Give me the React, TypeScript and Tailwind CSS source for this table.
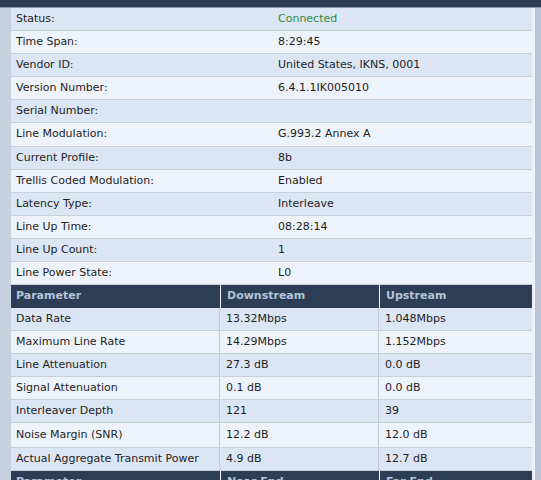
import React from "react";

const info: [string, string, boolean?][] = [
  ["Status:", "Connected", true],
  ["Time Span:", "8:29:45"],
  ["Vendor ID:", "United States, IKNS, 0001"],
  ["Version Number:", "6.4.1.1IK005010"],
  ["Serial Number:", ""],
  ["Line Modulation:", "G.993.2 Annex A"],
  ["Current Profile:", "8b"],
  ["Trellis Coded Modulation:", "Enabled"],
  ["Latency Type:", "Interleave"],
  ["Line Up Time:", "08:28:14"],
  ["Line Up Count:", "1"],
  ["Line Power State:", "L0"],
];

const stats: [string, string, string][] = [
  ["Data Rate", "13.32Mbps", "1.048Mbps"],
  ["Maximum Line Rate", "14.29Mbps", "1.152Mbps"],
  ["Line Attenuation", "27.3 dB", "0.0 dB"],
  ["Signal Attenuation", "0.1 dB", "0.0 dB"],
  ["Interleaver Depth", "121", "39"],
  ["Noise Margin (SNR)", "12.2 dB", "12.0 dB"],
  ["Actual Aggregate Transmit Power", "4.9 dB", "12.7 dB"],
];

function rowBg(i: number) {
  return i % 2 === 0 ? "bg-[#dbe5f3]" : "bg-[#eef3fb]";
}

function HeaderRow({ a, b, c }: { a: string; b: string; c: string }) {
  return (
    <div className="flex h-[23px] bg-[#f2f5fa]">
      <div className="w-[209px] flex items-center pl-[5px] bg-[#2e3d56] font-bold text-[#b3c4da]">{a}</div>
      <div className="w-[1px]" />
      <div className="w-[158px] flex items-center pl-[6px] bg-[#2e3d56] font-bold text-[#b3c4da]">{b}</div>
      <div className="w-[1px]" />
      <div className="flex-1 flex items-center pl-[6px] bg-[#2e3d56] font-bold text-[#b3c4da]">{c}</div>
    </div>
  );
}

export default function App() {
  return (
    <div
      className="w-[541px] h-[480px] overflow-hidden bg-[#c8d2e0] text-[11px] text-[#1e1e1e]"
      style={{ fontFamily: '"DejaVu Sans", Verdana, sans-serif' }}
    >
      <div className="h-[8px] bg-[#2d3c56] border-b border-[#8c9ab0]" />
      <div className="flex">
        <div className="w-[11px] shrink-0 bg-[#c6d0de]" />
        <div className="w-[521px] shrink-0">
          {info.map(([k, v, green], i) => (
            <div
              key={k}
              className={`flex ${i === 5 ? "h-[24px]" : "h-[23px]"} items-center border-b border-[#c9cfd9] ${rowBg(i)}`}
            >
              <div className="w-[267px] pl-[5px]">{k}</div>
              <div className={green ? "text-[#2f8a3c]" : ""}>{v}</div>
            </div>
          ))}
          <HeaderRow a="Parameter" b="Downstream" c="Upstream" />
          {stats.map(([k, d, u], i) => (
            <div
              key={k}
              className={`flex ${i === 5 ? "h-[25px]" : "h-[23px]"} items-center border-b border-[#c9cfd9] ${rowBg(i)}`}
            >
              <div className="w-[209px] h-full flex items-center pl-[5px] border-r border-[#c4c9d2]">{k}</div>
              <div className="w-[159px] h-full flex items-center pl-[6px] border-r border-[#c4c9d2]">{d}</div>
              <div className="flex-1 pl-[6px]">{u}</div>
            </div>
          ))}
          <HeaderRow a="Parameter" b="Near End" c="Far End" />
        </div>
        <div className="w-[3px] shrink-0 bg-[#eef2f8]" />
        <div className="flex-1 bg-[#b9c5d6]" />
      </div>
    </div>
  );
}
